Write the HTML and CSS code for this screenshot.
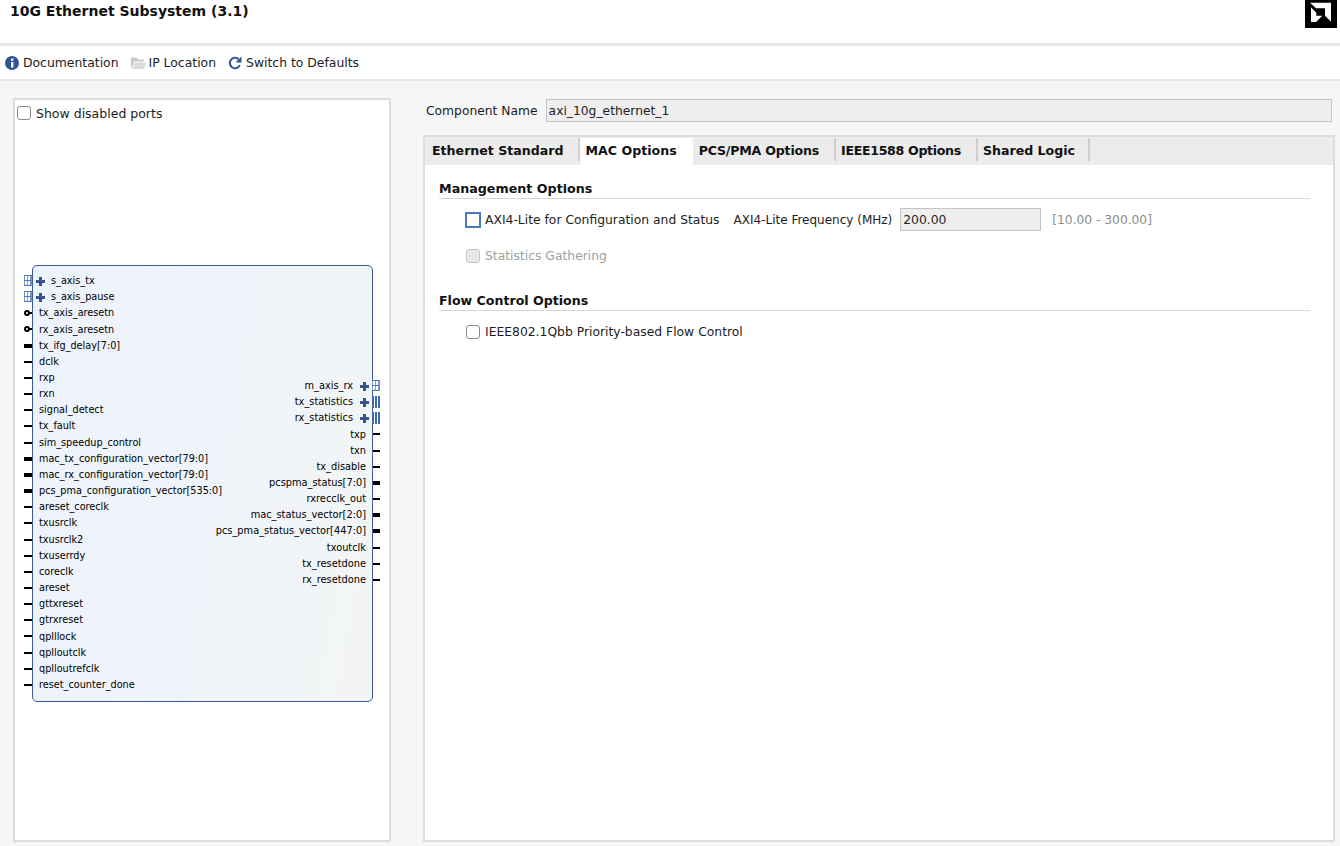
FILE: index.html
```html
<!DOCTYPE html>
<html lang="en">
<head>
<meta charset="utf-8">
<title>10G Ethernet Subsystem (3.1)</title>
<link rel="stylesheet" href="styles.css">
</head>
<body>
<header class="header">
  <h1 class="title">10G Ethernet Subsystem (3.1)</h1>
  <svg class="logo" width="32" height="28" viewBox="0 0 32 28">
    <rect width="32" height="28" fill="#000"/>
    <path d="M5 2.7L11 8.3H20V15.7L26 21.7V2.7Z" fill="#fff"/>
    <path d="M6 7.3L11.3 12.7V15.7H17.3L11 22H6Z" fill="#fff"/>
  </svg>
</header>
<nav class="toolbar">
  <span class="tool">
    <svg width="14" height="14" viewBox="0 0 14 14"><circle cx="7" cy="7" r="7" fill="#2f5597"/><rect x="6" y="6" width="2.4" height="5.5" fill="#fff"/><rect x="6" y="2.5" width="2.4" height="2.2" fill="#fff"/></svg>
    Documentation
  </span>
  <span class="tool tool-folder">
    <svg width="15" height="14" viewBox="0 0 15 14"><path d="M0 13V1.5H5.5L7 3.5H13V5.5H3.5L0 13Z" fill="#c8c8c8"/><path d="M1 13L4 6.5H15L13 13Z" fill="#dcdcdc"/></svg>
    IP Location
  </span>
  <span class="tool">
    <svg width="14" height="14" viewBox="0 0 14 14"><path d="M11.8 9.2A5.2 5.2 0 1 1 10.6 3.2" fill="none" stroke="#2f5597" stroke-width="2"/><path d="M13.5 0.5V6.5H7.5Z" fill="#2f5597"/></svg>
    Switch to Defaults
  </span>
</nav>
<main class="main">
  <section class="panel symbol-panel">
    <label class="check-row"><span class="box"></span>Show disabled ports</label>
    <div class="symbol">
      <div class="ports ports-left">
        <div class="port iface"><i class="grid"></i><b class="plus"></b>s_axis_tx</div>
        <div class="port iface"><i class="grid"></i><b class="plus"></b>s_axis_pause</div>
        <div class="port"><i class="stub ring"></i>tx_axis_aresetn</div>
        <div class="port"><i class="stub ring"></i>rx_axis_aresetn</div>
        <div class="port"><i class="stub bus"></i>tx_ifg_delay[7:0]</div>
        <div class="port"><i class="stub"></i>dclk</div>
        <div class="port"><i class="stub"></i>rxp</div>
        <div class="port"><i class="stub"></i>rxn</div>
        <div class="port"><i class="stub"></i>signal_detect</div>
        <div class="port"><i class="stub"></i>tx_fault</div>
        <div class="port"><i class="stub"></i>sim_speedup_control</div>
        <div class="port"><i class="stub bus"></i>mac_tx_configuration_vector[79:0]</div>
        <div class="port"><i class="stub bus"></i>mac_rx_configuration_vector[79:0]</div>
        <div class="port"><i class="stub bus"></i>pcs_pma_configuration_vector[535:0]</div>
        <div class="port"><i class="stub"></i>areset_coreclk</div>
        <div class="port"><i class="stub"></i>txusrclk</div>
        <div class="port"><i class="stub"></i>txusrclk2</div>
        <div class="port"><i class="stub"></i>txuserrdy</div>
        <div class="port"><i class="stub"></i>coreclk</div>
        <div class="port"><i class="stub"></i>areset</div>
        <div class="port"><i class="stub"></i>gttxreset</div>
        <div class="port"><i class="stub"></i>gtrxreset</div>
        <div class="port"><i class="stub"></i>qplllock</div>
        <div class="port"><i class="stub"></i>qplloutclk</div>
        <div class="port"><i class="stub"></i>qplloutrefclk</div>
        <div class="port"><i class="stub"></i>reset_counter_done</div>
      </div>
      <div class="ports ports-right">
        <div class="port iface">m_axis_rx<b class="plus"></b><i class="grid"></i></div>
        <div class="port iface">tx_statistics<b class="plus"></b><i class="bars"></i></div>
        <div class="port iface">rx_statistics<b class="plus"></b><i class="bars"></i></div>
        <div class="port">txp<i class="stub"></i></div>
        <div class="port">txn<i class="stub"></i></div>
        <div class="port">tx_disable<i class="stub"></i></div>
        <div class="port">pcspma_status[7:0]<i class="stub bus"></i></div>
        <div class="port">rxrecclk_out<i class="stub"></i></div>
        <div class="port">mac_status_vector[2:0]<i class="stub bus"></i></div>
        <div class="port">pcs_pma_status_vector[447:0]<i class="stub bus"></i></div>
        <div class="port">txoutclk<i class="stub"></i></div>
        <div class="port">tx_resetdone<i class="stub"></i></div>
        <div class="port">rx_resetdone<i class="stub"></i></div>
      </div>
    </div>
  </section>
  <section class="config">
    <div class="name-row">
      <span class="name-label">Component Name</span>
      <span class="field name-field">axi_10g_ethernet_1</span>
    </div>
    <div class="panel tabs-panel">
      <div class="tabs">
        <span class="tab tab-eth">Ethernet Standard</span>
        <span class="tab active">MAC Options</span>
        <span class="tab tab-pcs">PCS/PMA Options</span>
        <span class="tab tab-ieee">IEEE1588 Options</span>
        <span class="tab tab-shared">Shared Logic</span>
      </div>
      <div class="tab-body">
        <h2 class="group-title">Management Options</h2>
        <div class="opt-row">
          <span class="box focus"></span>
          <span class="opt-label">AXI4-Lite for Configuration and Status</span>
          <span class="freq-label">AXI4-Lite Frequency (MHz)</span>
          <span class="field freq-field">200.00</span>
          <span class="range">[10.00 - 300.00]</span>
        </div>
        <div class="opt-row disabled-row">
          <span class="box disabled"></span>
          <span class="opt-label">Statistics Gathering</span>
        </div>
        <h2 class="group-title second">Flow Control Options</h2>
        <div class="opt-row">
          <span class="box"></span>
          <span class="opt-label">IEEE802.1Qbb Priority-based Flow Control</span>
        </div>
      </div>
    </div>
  </section>
</main>
</body>
</html>
```
FILE: styles.css
```css
* { box-sizing: border-box; }
html, body { margin: 0; padding: 0; height: 846px; overflow: hidden; }
body {
  background: #f6f6f6;
  color: #1c1c1c;
  font-family: "DejaVu Sans", sans-serif;
  font-size: 12.5px;
  display: flex;
  flex-direction: column;
}
.header {
  height: 46px;
  flex: none;
  background: #fff;
  border-bottom: 3px solid #e6e6e6;
  display: flex;
  justify-content: space-between;
  align-items: flex-start;
  padding: 0 3px 0 10px;
}
.title {
  margin: 3px 0 0;
  font-size: 14px;
  line-height: 16px;
  font-weight: 700;
  color: #111;
}
.logo { display: block; }
.toolbar {
  height: 35px;
  flex: none;
  background: #fff;
  border-bottom: 2px solid #e6e6e6;
  display: flex;
  align-items: center;
  gap: 12px;
  padding: 0 0 0 5px;
  font-size: 12.4px;
}
.tool { display: flex; align-items: center; gap: 4px; }
.tool-folder { gap: 3px; }
.main {
  flex: 1;
  display: flex;
  align-items: stretch;
  padding: 17px 5px 4px 13px;
  gap: 32px;
}
.panel { background: #fff; border: 2px solid #dddddb; }
.symbol-panel { width: 378px; flex: none; position: relative; }
.check-row { display: flex; align-items: center; gap: 5px; height: 16px; margin: 5px 0 0 2px; }
.box {
  width: 14px; height: 14px; flex: none;
  border: 1px solid #8a8a8a; border-radius: 3px; background: #fff;
  display: inline-block;
}
.box.focus { width: 16px; height: 16px; margin: -1px; border: 2px solid #4a77c4; border-radius: 0; }
.box.disabled { border-color: #c4c4c4; background: #e8e8e8; }
.symbol {
  margin: 144px 0 0 17px;
  width: 341px;
  height: 437px;
  border: 1px solid #3b5a9a;
  border-radius: 5px;
  background: linear-gradient(100deg, #edf3fb 0%, #f0f4fa 55%, #f3f5f4 100%);
  position: relative;
  display: grid;
  font-size: 9.7px;
  color: #000;
}
.ports { display: flex; flex-direction: column; grid-area: 1 / 1; }
.ports-left { padding: 7px 0 0 6px; justify-self: start; }
.ports-right { padding: 112px 6px 0 0; align-items: flex-end; justify-self: end; font-size: 9.8px; }
.port { height: 16.16px; line-height: 16px; white-space: nowrap; position: relative; display: flex; align-items: center; }
.stub { position: absolute; height: 2px; width: 8px; background: #000; top: 7px; }
.ports-left .stub { left: -15px; }
.ports-right .stub { right: -14px; width: 7px; }
.stub.bus { height: 4px; top: 6px; }
.ports-left .stub.ring { width: 6px; left: -13px; }
.stub.ring::before {
  content: ""; position: absolute; left: -2px; top: -2px;
  box-sizing: border-box;
  width: 6px; height: 6px; border: 2px solid #000; border-radius: 50%; background: #fff;
}
.plus {
  width: 9px; height: 9px; flex: none;
  background:
    linear-gradient(#34548f, #34548f) center / 100% 3px no-repeat,
    linear-gradient(#34548f, #34548f) center / 3px 100% no-repeat;
}
.ports-left .plus { margin: 0 6px 0 -3px; }
.ports-right .plus { margin: 0 -3px 0 7px; }
.grid, .bars { position: absolute; width: 8px; height: 11px; top: 2px; }
.grid {
  border-right: 1px solid #6f90c4;
  background:
    repeating-linear-gradient(0deg, #4f77b3 0 1px, transparent 1px 5px),
    repeating-linear-gradient(90deg, #7d9ccb 0 1px, #fff 1px 3px);
}
.bars { background: repeating-linear-gradient(90deg, #3f68a8 0 2px, transparent 2px 3px); height: 12px; top: 2px; }
.ports-left .grid { left: -15px; }
.ports-right .grid, .ports-right .bars { right: -14px; }
.config { flex: 1; display: flex; flex-direction: column; min-width: 0; }
.name-row { display: flex; align-items: center; height: 23px; margin: 1px 3px 0 3px; gap: 8px; flex: none; font-size: 12.3px; }
.field {
  background: #eeeeee; border: 1px solid #c4c4c4;
  height: 23px; line-height: 22px; padding: 0 2px; color: #222; display: block;
}
.name-field { flex: 1; }
.tabs-panel { flex: 1; margin-top: 13px; display: flex; flex-direction: column; }
.tabs {
  height: 28px; flex: none; background: #ececec;
  display: flex; align-items: flex-start; font-weight: 700; color: #111; font-size: 12.6px;
}
.tab {
  height: 23px; line-height: 26px; margin-top: 1px;
  border-right: 2px solid #cfcfcf;
}
.tab-eth { padding: 0 14px 0 7px; }
.tab.active { background: #fff; height: 27px; border-right: 0; line-height: 26px; padding: 0 16px 0 6px; }
.tab-pcs { padding: 0 15px 0 6px; letter-spacing: -0.2px; }
.tab-ieee { padding: 0 15px 0 5px; letter-spacing: -0.33px; }
.tab-shared { padding: 0 13px 0 5px; }
.tab-body { flex: 1; background: #fff; padding: 15px 23px 0 14px; }
.group-title {
  margin: 0; font-size: 12.7px; line-height: 18px; height: 19px; font-weight: 700; color: #111;
  border-bottom: 1px solid #d6d6d6;
}
.group-title.second { margin-top: 25px; font-size: 12.6px; }
.opt-row { display: flex; align-items: center; height: 23px; margin-top: 9px; padding-left: 27px; font-size: 12.35px; }
.opt-label { margin-left: 5px; }
.disabled-row { margin-top: 13px; color: #a0a0a0; }
.group-title + .opt-row { margin-top: 9px; }
.freq-label { margin-left: 14px; font-size: 12px; }
.freq-field { width: 141px; margin-left: 8px; }
.range { margin-left: 11px; color: #8c8c8c; font-size: 12.25px; }
```
